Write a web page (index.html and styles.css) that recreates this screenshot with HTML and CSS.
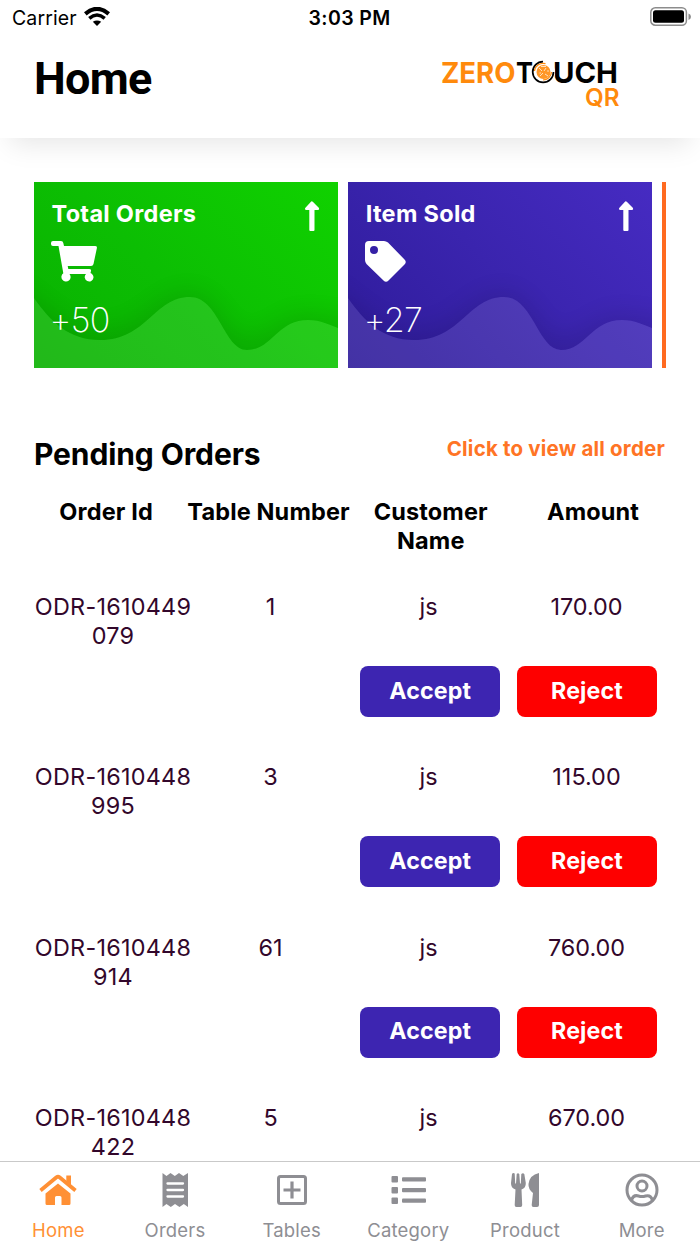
FILE: index.html
```html
<!DOCTYPE html>
<html lang="en">
<head>
<meta charset="utf-8">
<title>Home</title>
<link rel="stylesheet" href="styles.css">
</head>
<body>
<svg width="0" height="0" class="defs" aria-hidden="true">
  <defs>
    <filter id="soft" x="-20%" y="-40%" width="140%" height="180%"><feGaussianBlur stdDeviation="12"/></filter>
    <clipPath id="aboveWave"><path d="M0 0H304V146C296 143 287 138 274 138C243 138 238 168 213 168C190 168 185 115 156 115C120 115 113 158 66 158C35 158 17 140 0 116Z"/></clipPath>
    <symbol id="wave" viewBox="0 0 304 186">
      <g clip-path="url(#aboveWave)"><path d="M-20 100C17 130 35 148 66 148C113 148 120 110 156 110C185 110 190 155 213 155C238 155 243 132 274 132C287 132 310 137 324 140V186H-20Z" fill="#000" opacity=".1" filter="url(#soft)"/></g>
      <path d="M0 116C17 140 35 158 66 158C113 158 120 115 156 115C185 115 190 168 213 168C238 168 243 138 274 138C287 138 296 143 304 146V186H0Z" fill="#fff" opacity=".1"/>
    </symbol>
    <symbol id="arrow" viewBox="0 0 16 30"><path d="M7.2.4Q8 0 8.800.7L15 7Q15.700 9 14 9H10.500V29Q10.500 30 9.500 30H6.300Q5.300 30 5.300 29V9H2Q.2 8.500 1.200 7Z" fill="#fff"/></symbol>
  </defs>
</svg>
<div class="screen">
  <div class="status">
    <span class="carrier">Carrier</span>
    <svg class="wifi" width="26" height="19" viewBox="0 0 26 19" fill="none" stroke="#000"><path d="M1.300 6.800Q13-3 24.700 6.800" stroke-width="4.200"/><path d="M5.300 11.300Q13 4.800 20.700 11.300" stroke-width="3.500"/><path d="M8.800 14.800Q13 12 17.200 14.800L13 19Z" fill="#000" stroke="none"/></svg>
    <span class="time">3:03 PM</span>
    <svg class="battery" width="42" height="20" viewBox="0 0 42 20"><rect x=".8" y=".8" width="35.600" height="17.400" rx="4.500" fill="#fff" stroke="#8c8c8c" stroke-width="1.500"/><rect x="3" y="3.200" width="31" height="12.600" rx="2.500"/><path d="M38.500 6.500Q41 7.500 41 9.700T38.500 13Z" fill="#8c8c8c"/></svg>
  </div>
  <header class="header">
    <h1>Home</h1>
    <svg class="logo" width="190" height="66" viewBox="-5 -8 190 66" role="img" aria-label="Zero Touch QR">
      <g class="word"><text x="0" y="25" textLength="74.500" lengthAdjust="spacingAndGlyphs" fill="#ff8a0c">ZERO</text><text x="75" y="25" textLength="17" lengthAdjust="spacingAndGlyphs">T</text><text x="112" y="25" textLength="65" lengthAdjust="spacingAndGlyphs">UCH</text></g>
      <text class="qr" x="144" y="47.500" textLength="34.500" lengthAdjust="spacingAndGlyphs">QR</text>
      <circle cx="102" cy="14" r="12" fill="#fff"/>
      <g fill="none"><path d="M102 3.600A10.400 10.400 0 1 0 112.500 14" stroke="#000" stroke-width="1.700"/><path d="M93.500 13A8.700 8.700 0 0 1 104.500 5.700M110.500 14A8.500 8.500 0 0 1 102 22" stroke="#ff8a0c" stroke-width="1.200"/></g>
      <circle cx="102.500" cy="14" r="7" fill="#ff9727"/>
      <path d="M98 10L101 13M105 10L103 13M99 18L102 15M104 16L107 18M100 8.500H105M98.500 15H100M106 13H108" stroke="#fff" stroke-width=".7"/>
    </svg>
  </header>
  <main class="content">
    <section class="cards">
      <article class="card green"><svg class="waves"><use href="#wave"/></svg>
        <div class="card-body"><div class="card-top"><h3>Total Orders</h3><svg class="arrow" width="16" height="30"><use href="#arrow"/></svg></div>
        <svg class="card-icon" width="46" height="41" viewBox="0 0 46 41" fill="#fff"><path d="M2 0H10Q12 0 12.300 2L13 5H44Q46.300 5 45.900 7L42.500 23Q42 25 40 25H16.700L17.300 28H38Q40.500 28 40 30L39.500 32Q42.500 33.500 42.500 36.500A4.400 4.400 0 1 1 35 33H18.500A4.600 4.600 0 1 1 12.300 32.300L7.500 5H2Q0 5 0 3V2Q0 0 2 0Z"/></svg>
        <div class="value">+50</div></div></article>
      <article class="card purple"><svg class="waves"><use href="#wave"/></svg>
        <div class="card-body"><div class="card-top"><h3>Item Sold</h3><svg class="arrow" width="16" height="30"><use href="#arrow"/></svg></div>
        <svg class="card-icon tag" width="41" height="41" viewBox="0 0 41 41" fill="#fff"><path fill-rule="evenodd" d="M0 4Q0 0 4 0H19Q21 0 23 1.500L39.500 18.500Q42 21 39.500 23.500L23.500 39.500Q21 42 18.500 39.500L1.500 23Q0 21 0 19ZM9 5A4 4 0 1 0 9 13A4 4 0 1 0 9 5Z"/></svg>
        <div class="value">+27</div></div></article>
      <article class="card orange"></article>
    </section>
    <div class="section-head"><h2>Pending Orders</h2><a class="all">Click to view all order</a></div>
    <div class="columns"><span>Order Id</span><span class="nowrap">Table Number</span><span>Customer<br>Name</span><span>Amount</span></div>
    <div class="orders">
      <div class="order"><span class="id">ODR-1610449<br>079</span><span>1</span><span>js</span><span>170.00</span><button class="accept">Accept</button><button class="reject">Reject</button></div>
      <div class="order"><span class="id">ODR-1610448<br>995</span><span>3</span><span>js</span><span>115.00</span><button class="accept">Accept</button><button class="reject">Reject</button></div>
      <div class="order"><span class="id">ODR-1610448<br>914</span><span>61</span><span>js</span><span>760.00</span><button class="accept">Accept</button><button class="reject">Reject</button></div>
      <div class="order"><span class="id">ODR-1610448<br>422</span><span>5</span><span>js</span><span>670.00</span></div>
    </div>
  </main>
  <nav class="tabs">
    <a class="tab active"><svg width="38" height="36" viewBox="0 0 38 36"><path d="M1.500 18.500L17.500 5.300Q19 4.100 20.500 5.300L36.500 18.500" fill="none" stroke="currentColor" stroke-width="3.800"/><path d="M27.300 3.500H32V15L27.300 11ZM19 11.500L31.500 21.500V31.500Q31.500 33 30 33H22.500V25.500Q22.500 24 21 24H17.500Q16 24 16 25.500V33H8Q6.500 33 6.500 31.500V21.500Z" fill="currentColor"/></svg><span>Home</span></a>
    <a class="tab"><svg width="38" height="36" viewBox="0 0 38 36"><path d="M6.500 1L10.500 4L14.500 1L18.800 4L23 1L27.300 4L32 1V35L27.800 32L23.500 35L19 32L14.800 35L10.500 32L6.500 35Z" fill="currentColor"/><path d="M11.500 11.500H27M11.500 18H27M11.500 24.500H27" stroke="#fff" stroke-width="2.300" stroke-linecap="round"/></svg><span>Orders</span></a>
    <a class="tab"><svg width="38" height="36" viewBox="0 0 38 36" fill="none" stroke="currentColor"><rect x="5.500" y="4.500" width="27" height="27" rx="2" stroke-width="3"/><path d="M10.500 18H27.500M19 9.500V26.500" stroke-width="3.200"/></svg><span>Tables</span></a>
    <a class="tab"><svg width="38" height="36" viewBox="0 0 38 36" fill="currentColor"><rect x="2.500" y="4" width="6.500" height="6.500" rx="1"/><rect x="2.500" y="15" width="6.500" height="6.500" rx="1"/><rect x="2.500" y="25.500" width="6.500" height="6.500" rx="1"/><rect x="13" y="5.300" width="24" height="4.200" rx="1"/><rect x="13" y="16" width="24" height="4.200" rx="1"/><rect x="13" y="26.500" width="24" height="4.200" rx="1"/></svg><span>Category</span></a>
    <a class="tab"><svg width="38" height="36" viewBox="0 0 38 36" fill="currentColor"><path d="M6 2Q7 .5 8.700 1.500L9.200 11.500H10L10.700 2Q12 .5 13.300 2L14 11.500H14.800L15.300 2Q17 .5 18.300 2L19.800 11Q20 16 15.500 17.500L16.200 33Q16.200 35 14.500 35H10.500Q8.500 35 8.700 33L9.500 17.500Q4.800 16 5 11ZM33 1V33Q33 35 31 35H27.500Q25.500 35 25.700 33L27 21Q22 17 22.500 12Q23.500 3 33 1Z"/></svg><span>Product</span></a>
    <a class="tab"><svg width="38" height="36" viewBox="0 0 38 36" fill="none" stroke="currentColor" stroke-width="3"><circle cx="19" cy="18" r="15"/><circle cx="19" cy="14" r="5"/><path d="M8.500 28C10 24 13 23.200 15.500 24Q19 25.200 22.500 24C25 23.200 28 24 29.500 28"/></svg><span>More</span></a>
  </nav>
</div>
</body>
</html>
```
FILE: styles.css
```css
* { box-sizing: border-box; }
body { margin: 0; background: #fff; font-family: Inter, "Liberation Sans", sans-serif; color: #000; }
h1, h2, h3 { margin: 0; }
.defs { position: absolute; }
.screen { width: 700px; height: 1244px; display: flex; flex-direction: column; overflow: hidden; background: #fff; }
.status { height: 36px; flex: none; display: grid; grid-template-columns: 65px 1fr 126px 1fr 42px; padding: 0 8px 0 12px; line-height: 36px; font-size: 19.5px; }
.carrier { letter-spacing: .1px; }
.wifi { margin: 7px 0 0 7px; }
.time { grid-column: 3; font-weight: 600; letter-spacing: .4px; white-space: nowrap; margin-left: 8px; }
.battery { grid-column: 5; margin-top: 7px; }
.header { height: 102px; flex: none; display: flex; justify-content: space-between; padding: 17px 74px 0 34px; background: #fff; box-shadow: 0 16px 26px -10px rgba(0,0,0,.1); }
h1 { font-family: Roboto, sans-serif; font-size: 45px; line-height: 52px; font-weight: 700; letter-spacing: -.7px; }
.logo { margin-top: -3.500px; overflow: visible; }
.word { font-size: 29px; font-weight: 700; }
.qr { font-size: 24px; font-weight: 600; fill: #ff8a0c; }
.content { height: 1023px; flex: none; overflow: hidden; padding: 44px 34px 0; }
.cards { display: flex; gap: 10.200px; overflow: hidden; height: 186px; }
.card { width: 304px; height: 186px; flex: none; display: grid; color: #fff; }
.card > * { grid-area: 1 / 1; }
.waves { width: 304px; height: 186px; }
.green { background: linear-gradient(45deg, #09b100, #0cbe03 45%, #10d200); }
.purple { background: linear-gradient(45deg, #2e1b9a, #3a24ae 50%, #462bc2); }
.orange { background: #ff6a20; }
.card-body { padding: 17px 17.500px 0; display: flex; flex-direction: column; }
.card-top { display: flex; justify-content: space-between; height: 42px; }
h3 { font-size: 23.500px; line-height: 29px; font-weight: 650; letter-spacing: .3px; }
.arrow { margin: 2px .5px 0 0; }
.card-icon { margin-left: -1px; flex: none; }
.value { font-size: 34px; line-height: 42px; font-weight: 200; margin: 17px 0 0 -2px; letter-spacing: -.7px; }
.section-head { display: flex; justify-content: space-between; margin-top: 67px; height: 62px; }
h2 { font-size: 30px; line-height: 38px; font-weight: 650; letter-spacing: -.1px; }
.all { color: #ff7425; font-size: 20.5px; line-height: 27px; font-weight: 650; letter-spacing: .2px; margin-right: 1px; }
.columns { display: grid; grid-template-columns: repeat(4, 162.300px); margin: 0 -9px; height: 95px; font-size: 23.5px; line-height: 29px; font-weight: 650; text-align: center; letter-spacing: .15px; }
.nowrap { white-space: nowrap; }
.order { height: 170.400px; display: grid; grid-template-columns: repeat(4, 158px); grid-template-rows: 74px 51px; font-size: 23.400px; line-height: 29px; text-align: center; color: #32072b; }
.order > span { margin-left: -1px; }
.order > .id { letter-spacing: .25px; margin-left: 0; }
button { border: 0; border-radius: 8px; font: 650 23.200px/49px Inter, sans-serif; color: #fff; padding: 0 0 1px; width: 140px; margin-left: 10.300px; letter-spacing: .15px; }
.accept { grid-column: 3; background: #3d25b1; }
.reject { grid-column: 4; background: #fe0000; margin-left: 9px; }
.tabs { height: 83px; flex: none; display: grid; grid-template-columns: repeat(6, 1fr); border-top: 1px solid #c9c9c9; background: #fff; }
.tab { display: flex; flex-direction: column; align-items: center; color: #8e8e93; padding-top: 10px; font-size: 18.500px; line-height: 24px; letter-spacing: .2px; }
.tab span { margin-top: 10px; }
.active { color: #ff9035; }
```
